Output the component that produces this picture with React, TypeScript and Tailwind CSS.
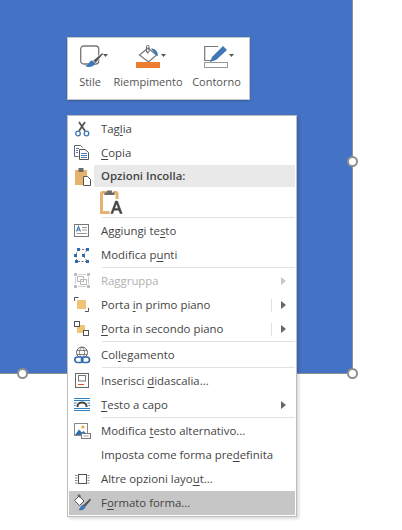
import React from "react";

const B = "#3f78b5";

const Svg = ({ children, w = 20, h = 20 }: { children: React.ReactNode; w?: number; h?: number }) => (
  <svg width={w} height={h} viewBox={`0 0 ${w} ${h}`} fill="none">{children}</svg>
);

const Scissors = () => (
  <Svg>
    <path d="M7 3l6 9M13 3l-6 9" stroke="#555" strokeWidth="1.8" />
    <circle cx="6" cy="14.500" r="2.300" stroke={B} strokeWidth="1.300" />
    <circle cx="14.500" cy="14.500" r="2.300" stroke={B} strokeWidth="1.300" />
  </Svg>
);
const Copy = () => (
  <Svg>
    <path d="M2.500 2.500h6l2 2M2.500 2.500v11h4" stroke="#666" fill="#fff" />
    <path d="M7.500 6.500h5.500l3.500 3v7h-9z" stroke="#555" fill="#fff" />
    <path d="M4 5.500h3M4 7.500h2M4 9.500h2M9 10.500h6M9 12.500h6M9 14.500h6" stroke="#4a7ab0" />
  </Svg>
);
const PasteSmall = () => (
  <Svg>
    <rect x="2" y="4" width="12" height="15" fill="#e5b36d" />
    <rect x="5.500" y="2" width="5" height="4" fill="#6a6a6a" />
    <path d="M10.500 10.500h4l3 3v6h-7z" fill="#fff" stroke="#555" />
  </Svg>
);
const PasteText = () => (
  <Svg w={24} h={26}>
    <path d="M8 3.500H2.500a1 1 0 0 0-1 1V23.500h8" stroke="#e5b36d" strokeWidth="3" />
    <path d="M13 3.500h3a1 1 0 0 1 1 1V10" stroke="#e5b36d" strokeWidth="3" />
    <path d="M4.500 6V3.500h2.500V1.500h5v2h2.500V6z" fill="#6a6a6a" />
    <path d="M10.800 24.500L15.500 12h2l4.700 12.500h-2.200l-1.200-3.300h-4.800l-1.200 3.300zm3.900-5.100h3.600l-1.800-5z" fill="#444" stroke="#444" strokeWidth="0.500" />
  </Svg>
);
const AddText = () => (
  <Svg>
    <rect x="2.500" y="3.500" width="14" height="12" stroke="#777" fill="#fff" />
    <path d="M4.500 10.500l2-5 2 5M5.200 9h2.600" stroke="#3f78b5" strokeWidth="1.100" />
    <path d="M10 6.500h5M10 9h5M4.500 12.500h10.500" stroke="#999" />
  </Svg>
);
const EditPoints = () => (
  <Svg>
    <path d="M6.500 4.500h9l-4.500 6 4.500 6h-10.500l-1.500-6z" stroke="#777" strokeDasharray="2 1.500" />
    <g fill="#2f6cb0">
      <rect x="5" y="3" width="3" height="3" />
      <rect x="14" y="3" width="3" height="3" />
      <rect x="2" y="9" width="3" height="3" />
      <rect x="10" y="9" width="3" height="3" />
      <rect x="3" y="15" width="3" height="3" />
      <rect x="14" y="15" width="3" height="3" />
    </g>
  </Svg>
);
const GroupIcon = () => (
  <Svg>
    <g fill="#bdbdbd">
      <rect x="2" y="2" width="3" height="3" />
      <rect x="15" y="2" width="3" height="3" />
      <rect x="2" y="14" width="3" height="3" />
      <rect x="15" y="14" width="3" height="3" />
    </g>
    <path d="M6 3.500h8M6 15.500h8M3.500 6v7M16.500 6v7" stroke="#ccc" />
    <rect x="5.500" y="5.500" width="6" height="5" stroke="#bbb" />
    <rect x="8.500" y="8.500" width="6" height="5" stroke="#bbb" />
  </Svg>
);
const Front = () => (
  <Svg>
    <path d="M2.500 6V2.500H6.500M13 16.500h3.500V13" stroke="#555" />
    <rect x="5" y="5" width="9" height="9" fill="#efc477" />
  </Svg>
);
const Back = () => (
  <Svg>
    <rect x="5" y="6" width="8" height="8" fill="#efc477" />
    <rect x="2.500" y="2.500" width="5" height="5" fill="#fff" stroke="#555" />
    <rect x="11.500" y="11.500" width="5" height="5" fill="#fff" stroke="#555" />
  </Svg>
);
const LinkIcon = () => (
  <Svg>
    <circle cx="10" cy="7.500" r="5.500" stroke="#666" />
    <path d="M5 5.500h10M5 9.500h10M10 2c-3.500 3.500-3.500 7.500 0 11M10 2c3.500 3.500 3.500 7.500 0 11" stroke="#666" strokeWidth="0.800" />
    <rect x="2.800" y="12" width="8" height="5.500" rx="2.700" fill="#fff" stroke="#2f6cb0" strokeWidth="1.700" />
    <rect x="9.500" y="12" width="8" height="5.500" rx="2.700" stroke="#2f6cb0" strokeWidth="1.700" />
  </Svg>
);
const Caption = () => (
  <Svg>
    <rect x="3.500" y="2.500" width="13" height="14" stroke="#666" fill="#fff" />
    <rect x="6.500" y="4.500" width="7" height="5.500" stroke="#777" />
    <path d="M6 13.500h6" stroke="#e2522a" />
  </Svg>
);
const Wrap = () => (
  <Svg>
    <path d="M2 3.500h16M2 5.500h16" stroke="#2f7fc1" />
    <path d="M2 8h2.500M15.500 8h2.500M2 10.500h1.500M16.500 10.500h1.500M2 13.500h16M2 15.500h16" stroke="#2f7fc1" />
    <path d="M5.500 12v-1a4.500 3.500 0 0 1 9 0v1" stroke="#444" strokeWidth="2" />
  </Svg>
);
const AltText = () => (
  <Svg>
    <rect x="2.500" y="2.500" width="13" height="12" fill="#fff" stroke="#888" />
    <path d="M3 14l4-5.500 3 3 1.500-1.500 4 4z" fill="#2f6cb0" />
    <circle cx="11" cy="6" r="1.600" fill="#f0a63c" />
    <rect x="9.500" y="12.500" width="9" height="5" fill="#fff" stroke="#777" />
    <path d="M11.500 15h5" stroke="#999" />
  </Svg>
);
const LayoutIcon = () => (
  <Svg>
    <rect x="6.500" y="5.500" width="8" height="9" stroke="#555" />
    <path d="M3 6.500h2.500M3 9h2.500M3 11.500h2.500M3 14h2.500M15.500 6.500h2M15.500 9h2M15.500 11.500h2M15.500 14h2" stroke="#888" />
  </Svg>
);
const FormatShape = () => (
  <Svg>
    <path d="M2.500 7.500l4.500-4.500 5 5-4.500 4.500z" fill="#fff" stroke="#555" />
    <path d="M6 3V2h2v3" stroke="#555" />
    <path d="M18 5.500l-6.500 6.500 1.500 2 6-7z" fill="#555" />
    <path d="M11 11.500l2.500 2.500c-1 2.500-4 4-7.500 3 2.500-1 2-4 5-5.500z" fill={B} />
  </Svg>
);

type Row = { pre: string; u?: string; post?: string; icon?: React.ReactNode; off?: boolean; arrow?: boolean; split?: boolean; hot?: boolean };
type Item = { sep: true } | { header: string; icon: React.ReactNode } | { pasteRow: true } | Row;

const items: Item[] = [
  { pre: "Tag", u: "l", post: "ia", icon: <Scissors /> },
  { pre: "", u: "C", post: "opia", icon: <Copy /> },
  { header: "Opzioni Incolla:", icon: <PasteSmall /> },
  { pasteRow: true },
  { sep: true },
  { pre: "Aggiungi te", u: "s", post: "to", icon: <AddText /> },
  { pre: "Modifica p", u: "u", post: "nti", icon: <EditPoints /> },
  { sep: true },
  { pre: "Raggruppa", icon: <GroupIcon />, off: true, arrow: true },
  { pre: "Porta ", u: "i", post: "n primo piano", icon: <Front />, arrow: true, split: true },
  { pre: "", u: "P", post: "orta in secondo piano", icon: <Back />, arrow: true, split: true },
  { sep: true },
  { pre: "Col", u: "l", post: "egamento", icon: <LinkIcon /> },
  { sep: true },
  { pre: "Inserisci ", u: "d", post: "idascalia...", icon: <Caption /> },
  { pre: "", u: "T", post: "esto a capo", icon: <Wrap />, arrow: true },
  { sep: true },
  { pre: "Modifica ", u: "t", post: "esto alternativo...", icon: <AltText /> },
  { pre: "Imposta come forma pre", u: "d", post: "efinita" },
  { pre: "Altre opzioni layo", u: "u", post: "t...", icon: <LayoutIcon /> },
  { pre: "F", u: "o", post: "rmato forma...", icon: <FormatShape />, hot: true },
];

const Handle = ({ className }: { className: string }) => (
  <div className={`absolute w-[11px] h-[11px] rounded-full bg-white border-2 border-[#8f8f8f] ${className}`} />
);

const Arrow = ({ off }: { off?: boolean }) => (
  <svg width="5" height="8" viewBox="0 0 5 8"><path d="M0 0l5 4-5 4z" fill={off ? "#c8c8c8" : "#666"} /></svg>
);

const ToolBtn = ({ icon, label, className }: { icon: React.ReactNode; label: string; className: string }) => (
  <div className={`flex flex-col items-center ${className}`}>
    <div className="h-[29px] flex items-start">{icon}</div>
    <div className="text-[11px] leading-[16px] text-[#555] whitespace-nowrap">{label}</div>
  </div>
);

const Caret = () => <path d="M0 0h5l-2.500 3z" fill="#555" />;

export default function App() {
  return (
    <div className="relative w-[402px] h-[530px] bg-white overflow-hidden font-['Open_Sans','Noto_Sans',sans-serif] pl-[67px] pt-[37px]">
      <div className="absolute left-0 top-0 w-[353px] h-[374px] bg-[#4472c4] border-r border-b border-[#8f8f8f]" />
      <Handle className="left-[347px] top-[156px]" />
      <Handle className="left-[347px] top-[368px]" />
      <Handle className="left-[17px] top-[368px]" />

      <div className="relative w-[183px] h-[63px] bg-white border border-[#c6c6c6] flex pt-[7px] pl-[10px] shadow-[0_1px_2px_rgba(0,0,0,0.2)]">
        <ToolBtn
          className="w-[24px]"
          label="Stile"
          icon={
            <svg width="30" height="24" viewBox="0 0 30 24" fill="none" className="ml-[10px]">
              <rect x="0.700" y="1" width="18" height="18" rx="3" stroke="#777" strokeWidth="1.300" />
              <path d="M23 7l-10 8.500 2.500 3 7.500-9z" fill="#555" stroke="#fff" strokeWidth="0.800" />
              <path d="M12.500 15.500c-4 0-2.500 4-7.500 5.500 4 2 9 0.500 10.500-2.500z" fill="#3f78b5" />
              <g transform="translate(23 9)"><Caret /></g>
            </svg>
          }
        />
        <ToolBtn
          className="w-[68px] ml-[12px]"
          label="Riempimento"
          icon={
            <svg width="30" height="24" viewBox="0 0 30 24" fill="none" className="ml-[6px]">
              <path d="M3.500 10L12 3l8.500 7-8 7z" fill="#fff" stroke="#777" strokeWidth="1.200" />
              <path d="M10.500 7V1.500a1 1 0 0 1 2.500 0V7" stroke="#666" />
              <circle cx="11.700" cy="7.500" r="1.100" fill="#666" />
              <path d="M15 3.500c4 0 7 2.500 7 7.500-1.500-1-3-1.500-4-3.500z" fill="#3f78b5" />
              <rect x="0" y="17" width="24" height="6" fill="#ed7d31" />
              <g transform="translate(25 9)"><Caret /></g>
            </svg>
          }
        />
        <ToolBtn
          className="w-[49px] ml-[10px]"
          label="Contorno"
          icon={
            <svg width="30" height="24" viewBox="0 0 30 24" fill="none" className="ml-[5px]">
              <path d="M14 1.500H0.700v14h6.500" stroke="#777" strokeWidth="1.200" />
              <path d="M6 17l2-5L19 1l4 4-11 10z" fill="#3f78b5" />
              <rect x="0.500" y="17.500" width="23" height="5" fill="#fff" stroke="#999" />
              <g transform="translate(25 9)"><Caret /></g>
            </svg>
          }
        />
      </div>

      <div className="relative mt-[15px] w-[230px] h-[402px] bg-white border border-[#bdbdbd] pt-[1px] pl-[1px] pr-[1px] shadow-[2px_2px_3px_rgba(0,0,0,0.15)] text-[11.4px] text-[#444]">
        {items.map((it, i) => {
          if ("sep" in it) return <div key={i} className="h-[2px] ml-[33px] border-t border-[#e1e1e1]" />;
          if ("pasteRow" in it)
            return (
              <div key={i} className="h-[30px] pl-[31px] pt-[2px]">
                <PasteText />
              </div>
            );
          if ("header" in it)
            return (
              <div key={i} className="h-[22px] flex items-center">
                <div className="w-[25px] pl-[4px] flex items-center">{it.icon}</div>
                <div className="flex-1 h-full bg-[#e9e9e9] pl-[7px] font-semibold leading-[22px] whitespace-nowrap">{it.header}</div>
              </div>
            );
          return (
            <div key={i} className={`h-[24px] flex items-center ${it.hot ? "bg-[#c6c6c6]" : ""} ${it.off ? "text-[#b1b1b1]" : ""}`}>
              <div className="w-[32px] pl-[3px] flex items-center">{it.icon}</div>
              <div className="flex-1 whitespace-nowrap">
                {it.pre}
                {it.u ? <u className="underline-offset-2">{it.u}</u> : null}
                {it.post}
              </div>
              {it.split ? <div className="w-px h-[13px] bg-[#e1e1e1] mr-[9px]" /> : null}
              {it.arrow ? <div className="w-[14px] flex items-center"><Arrow off={it.off} /></div> : null}
            </div>
          );
        })}
      </div>
    </div>
  );
}
